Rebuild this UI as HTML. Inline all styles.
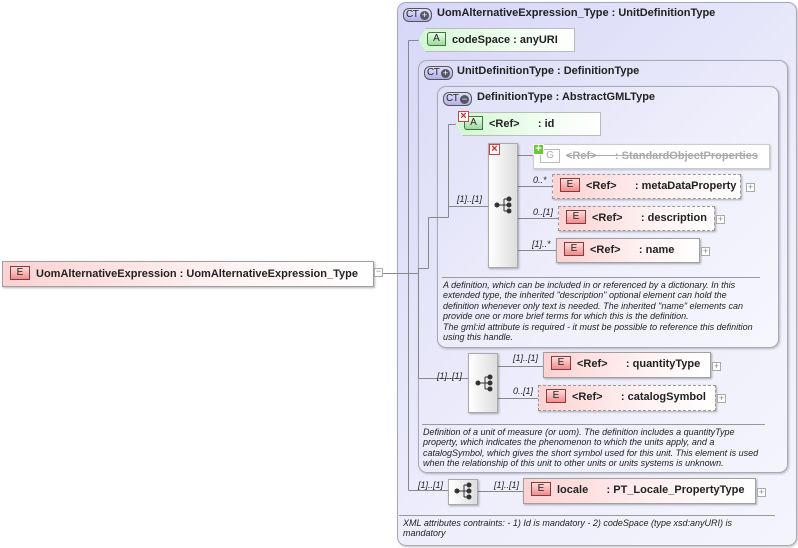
<!DOCTYPE html>
<html><head><meta charset="utf-8"><style>
*{margin:0;padding:0;box-sizing:border-box}
body{width:798px;height:548px;background:#fff;position:relative;overflow:hidden;font-family:"Liberation Sans",Arial,sans-serif;color:#222}
.a{position:absolute}
.box{position:absolute;border:1px solid #a8a8b8;border-radius:9px;box-shadow:1px 1px 2px rgba(0,0,0,.25)}
.ct{position:absolute;width:29px;height:14px;border:1px solid #555;border-radius:6px;background:linear-gradient(#e0e0fa,#b0b0ea);font-size:10px;line-height:12px;padding-left:2px;font-weight:normal;letter-spacing:-0.5px}
.ct i{position:absolute;right:2px;top:2px;width:9px;height:9px;border-radius:50%;background:#556;color:#fff;font-style:normal;font-size:9px;line-height:9px;text-align:center;letter-spacing:0}
.ht{position:absolute;font-size:11px;font-weight:bold;white-space:nowrap}
.el{position:absolute;height:25px;border:1px solid #a0a0a0;background:linear-gradient(to right,#fcd2d2,#fff2f2 60%,#fff);box-shadow:1px 1px 2px rgba(0,0,0,.3);font-size:11px;font-weight:bold;line-height:23px;white-space:nowrap}
.el.d{border:1px dashed #999}
.eb{display:inline-block;vertical-align:middle;width:20px;height:14px;margin:0 6px 0 7px;border:1px solid #883a3a;background:linear-gradient(#fdd,#f08c8c);font-size:10px;line-height:12px;text-align:center;font-weight:normal;position:relative;top:-1px}
.pl{position:absolute;width:9px;height:9px;border:1px solid #aaa;background:#fff;font-size:9px;line-height:7px;text-align:center;color:#888}
.at{position:absolute;height:24px;background:linear-gradient(to right,#d4f5d4,#f0fff0 60%,#fff);border:1px solid #bbb;box-shadow:1px 1px 2px rgba(0,0,0,.3);font-size:11px;font-weight:bold;line-height:22px;white-space:nowrap}
.ab{display:inline-block;vertical-align:middle;width:19px;height:14px;margin:0 6px 0 8px;border:1px solid #3a7a3a;border-radius:3px 0 0 3px;background:linear-gradient(#e8ffe8,#9ed89e);font-size:10px;line-height:12px;text-align:center;font-weight:normal;position:relative;top:-1px}
.sq{position:absolute;border:1px solid #aaa;background:linear-gradient(to right,#fff,#ddd);box-shadow:1px 1px 2px rgba(0,0,0,.3)}
.x{position:absolute;width:11px;height:11px;background:#fff;border:1px solid #c44;color:#d22;font-size:11px;line-height:9px;text-align:center;font-weight:bold}
.c{position:absolute;font-size:9px;font-style:italic;white-space:nowrap}
.txt{position:absolute;font-size:9px;font-style:italic;line-height:10.4px;color:#222;white-space:nowrap}
.hr{position:absolute;height:1px;background:#999}
</style></head><body>

<div class="box" style="left:397px;top:2px;width:400px;height:544px;background:linear-gradient(135deg,#d6d6f7,#eeeefc 60%,#f4f4fd)"></div>
<div class="ct" style="left:403px;top:8px">CT<i>+</i></div>
<div class="ht" style="left:437px;top:7px">UomAlternativeExpression_Type : UnitDefinitionType</div>

<div class="box" style="left:418px;top:60px;width:370px;height:413px;background:linear-gradient(135deg,#dcdcf7,#eeeefc 60%,#f4f4fd)"></div>
<div class="ct" style="left:424px;top:66px">CT<i>+</i></div>
<div class="ht" style="left:457px;top:65px">UnitDefinitionType : DefinitionType</div>

<div class="box" style="left:437px;top:86px;width:342px;height:262px;background:linear-gradient(135deg,#e0e0f8,#f0f0fc 60%,#f6f6fe)"></div>
<div class="ct" style="left:443px;top:92px">CT<i>−</i></div>
<div class="ht" style="left:477px;top:91px">DefinitionType : AbstractGMLType</div>

<svg class="a" style="left:0;top:0" width="798" height="548">
<g stroke="#888" fill="none" stroke-width="1">
<path d="M374.5 273.5H397.5"/>
<path d="M397 273.5H408.5M408.5 40.5V490.5M408.5 40.5H420M408.5 490.5H448"/>
<path d="M408.5 273.5H418.5M418.5 268.5V378.5M418.5 378.5H468"/>
<path d="M418.5 268.5H428.5M428.5 217.5V268.5M428.5 217.5H448.5M448.5 124.5V217.5M448.5 124.5H458M448.5 206.5H488"/>
<path d="M517 155.5H533M517 186.5H552M517 218.5H558M517 250.5H556"/>
<path d="M497 366.5H543M497 398.5H538"/>
<path d="M477 491.5H523"/>
</g>
</svg>

<div class="el" style="left:2px;top:261px;width:372px;height:26px;line-height:24px"><span class="eb">E</span>UomAlternativeExpression : UomAlternativeExpression_Type</div>
<div class="pl" style="left:374px;top:268px;line-height:5px">−</div>

<div class="at" style="left:418px;top:28px;width:157px;clip-path:polygon(8px 0,100% 0,100% 100%,8px 100%,0 50%)"><span class="ab">A</span>codeSpace : anyURI</div>

<div class="at" style="left:455px;top:112px;width:146px;clip-path:polygon(8px 0,100% 0,100% 100%,8px 100%,0 50%)"><span class="ab">A</span>&lt;Ref&gt;&nbsp;&nbsp;&nbsp;&nbsp;&nbsp;&nbsp;: id</div>
<div class="x" style="left:458px;top:111px">×</div>

<div class="sq" style="left:488px;top:143px;width:30px;height:125px"></div>
<div class="x" style="left:489px;top:144px">×</div>
<svg class="a" style="left:494px;top:196px" width="20" height="18"><g fill="#333" stroke="#333"><circle cx="3" cy="9" r="2"/><circle cx="15" cy="3" r="2"/><circle cx="15" cy="9" r="2"/><circle cx="15" cy="15" r="2"/><path d="M3 9H10M10 3V15M10 3H15M10 15H15M10 9H15" fill="none"/></g></svg>
<div class="c" style="left:457px;top:194px">[1]..[1]</div>

<div class="a" style="left:533px;top:144px;width:237px;height:25px;border:1px solid #ccc;background:#fff;box-shadow:1px 1px 2px rgba(0,0,0,.2);font-size:11px;color:#aaa;font-weight:bold;line-height:23px;white-space:nowrap"><span style="display:inline-block;width:20px;height:14px;border:1px solid #bbb;margin:0 6px 0 6px;text-align:center;font-weight:normal;font-size:10px;line-height:12px;vertical-align:middle">G</span><span style="text-decoration:line-through">&lt;Ref&gt;&nbsp;&nbsp;&nbsp;&nbsp;&nbsp;&nbsp;: StandardObjectProperties</span></div>
<div class="a" style="left:533px;top:144px;width:11px;height:11px;background:#6c3;border:1px solid #fff;color:#fff;font-size:11px;line-height:9px;text-align:center;font-weight:bold">+</div>

<div class="c" style="left:533px;top:175px">0..*</div>
<div class="el d" style="left:552px;top:174px;width:189px"><span class="eb">E</span>&lt;Ref&gt;&nbsp;&nbsp;&nbsp;&nbsp;&nbsp;&nbsp;: metaDataProperty</div>
<div class="pl" style="left:746px;top:183px">+</div>
<div class="c" style="left:533px;top:207px">0..[1]</div>
<div class="el d" style="left:558px;top:206px;width:157px"><span class="eb">E</span>&lt;Ref&gt;&nbsp;&nbsp;&nbsp;&nbsp;&nbsp;&nbsp;: description</div>
<div class="pl" style="left:716px;top:215px">+</div>
<div class="c" style="left:532px;top:239px">[1]..*</div>
<div class="el" style="left:556px;top:238px;width:144px"><span class="eb">E</span>&lt;Ref&gt;&nbsp;&nbsp;&nbsp;&nbsp;&nbsp;&nbsp;: name</div>
<div class="pl" style="left:701px;top:247px">+</div>

<div class="hr" style="left:442px;top:277px;width:318px"></div>
<div class="txt" style="left:443px;top:280px">A definition, which can be included in or referenced by a dictionary. In this<br>extended type, the inherited "description" optional element can hold the<br>definition whenever only text is needed. The inherited "name" elements can<br>provide one or more brief terms for which this is the definition.<br>The gml:id attribute is required - it must be possible to reference this definition<br>using this handle.</div>

<div class="sq" style="left:468px;top:353px;width:30px;height:60px"></div>
<svg class="a" style="left:475px;top:374px" width="20" height="18"><g fill="#333" stroke="#333"><circle cx="3" cy="9" r="2"/><circle cx="15" cy="3" r="2"/><circle cx="15" cy="9" r="2"/><circle cx="15" cy="15" r="2"/><path d="M3 9H10M10 3V15M10 3H15M10 15H15M10 9H15" fill="none"/></g></svg>
<div class="c" style="left:437px;top:371px">[1]..[1]</div>
<div class="c" style="left:513px;top:353px">[1]..[1]</div>
<div class="el" style="left:543px;top:352px;width:168px;height:26px"><span class="eb">E</span>&lt;Ref&gt;&nbsp;&nbsp;&nbsp;&nbsp;&nbsp;&nbsp;: quantityType</div>
<div class="pl" style="left:712px;top:362px">+</div>
<div class="c" style="left:513px;top:386px">0..[1]</div>
<div class="el d" style="left:538px;top:385px;width:178px;height:26px"><span class="eb">E</span>&lt;Ref&gt;&nbsp;&nbsp;&nbsp;&nbsp;&nbsp;&nbsp;: catalogSymbol</div>
<div class="pl" style="left:717px;top:394px">+</div>

<div class="hr" style="left:422px;top:424px;width:343px"></div>
<div class="txt" style="left:423px;top:427px">Definition of a unit of measure (or uom). The definition includes a quantityType<br>property, which indicates the phenomenon to which the units apply, and a<br>catalogSymbol, which gives the short symbol used for this unit. This element is used<br>when the relationship of this unit to other units or units systems is unknown.</div>

<div class="sq" style="left:448px;top:479px;width:30px;height:26px"></div>
<svg class="a" style="left:454px;top:482px" width="20" height="18"><g fill="#333" stroke="#333"><circle cx="3" cy="9" r="2"/><circle cx="15" cy="3" r="2"/><circle cx="15" cy="9" r="2"/><circle cx="15" cy="15" r="2"/><path d="M3 9H10M10 3V15M10 3H15M10 15H15M10 9H15" fill="none"/></g></svg>
<div class="c" style="left:418px;top:480px">[1]..[1]</div>
<div class="c" style="left:494px;top:480px">[1]..[1]</div>
<div class="el" style="left:523px;top:478px;width:233px;height:26px"><span class="eb">E</span>locale&nbsp;&nbsp;&nbsp;&nbsp;&nbsp;&nbsp;: PT_Locale_PropertyType</div>
<div class="pl" style="left:757px;top:488px">+</div>

<div class="hr" style="left:399px;top:515px;width:376px"></div>
<div class="txt" style="left:403px;top:518px">XML attributes contraints: - 1) Id is mandatory - 2) codeSpace (type xsd:anyURI) is<br>mandatory</div>

</body></html>
